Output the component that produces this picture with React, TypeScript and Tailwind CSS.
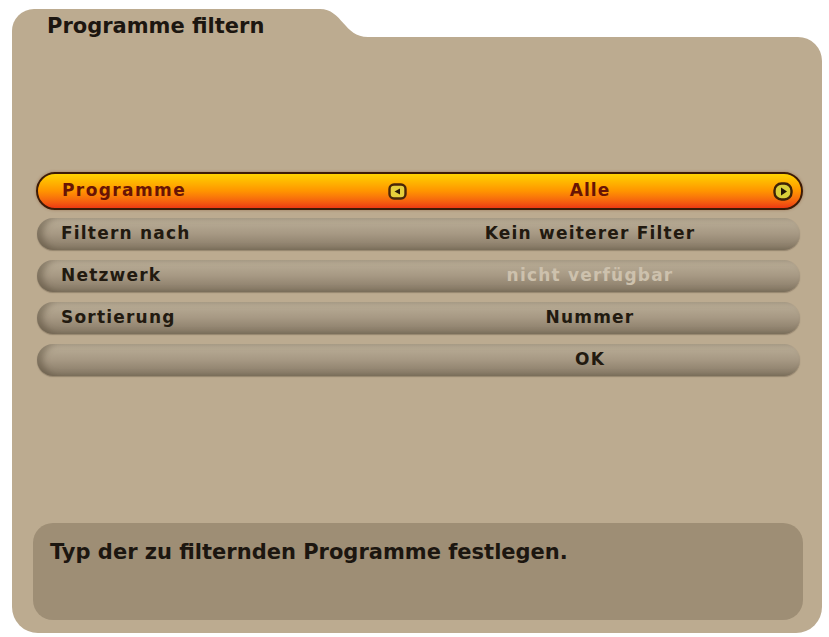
import React from "react";

type Row = { label: string; value: string; disabled?: boolean };

const ROWS: Row[] = [
  { label: "Filtern nach", value: "Kein weiterer Filter" },
  { label: "Netzwerk", value: "nicht verfügbar", disabled: true },
  { label: "Sortierung", value: "Nummer" },
  { label: "", value: "OK" },
];

function ArrowLeft() {
  return (
    <svg width="19" height="17" viewBox="0 0 19 17" aria-hidden>
      <rect x="1.5" y="1.5" width="16" height="14" rx="4.5" fill="#e6cf3c" stroke="#4a2608" strokeWidth="2.4" />
      <path d="M12 5.5 L6.5 8.5 L12 11.5 Z" fill="#2a1a08" />
    </svg>
  );
}

function ArrowRight() {
  return (
    <svg width="20" height="19" viewBox="0 0 20 19" aria-hidden>
      <rect x="1.5" y="1.5" width="17" height="16" rx="7" fill="#d9cf3a" stroke="#3e2206" strokeWidth="2.4" />
      <path d="M8 5.5 L14 9.5 L8 13.5 Z" fill="#1e1406" />
    </svg>
  );
}

export default function App() {
  return (
    <div className="w-[829px] h-[637px] bg-white pl-[12px] pt-[9px] font-['DejaVu_Sans',sans-serif]">
      <div className="flex flex-col w-[810px] h-[624px]">
        {/* folder tab */}
        <div className="flex h-[28px]">
          <div className="w-[308px] bg-[#bcab90] rounded-tl-[22px] pl-[35px] pt-[5px]">
            <h1 className="text-[21px] leading-[24px] font-bold text-[#1c1610] whitespace-nowrap">
              Programme filtern
            </h1>
          </div>
          <svg width="48" height="28" viewBox="0 0 48 28" aria-hidden>
            <path d="M0 0 C 22 0 24 28 48 28 L 0 28 Z" fill="#bcab90" />
          </svg>
        </div>

        <div className="flex-1 bg-[#bcab90] rounded-tr-[24px] rounded-b-[26px] flex flex-col pl-[24px] pr-[19px] pb-[13px]">
          <div className="h-[135px]" />

          {/* selected row */}
          <div className="h-[38px] rounded-full border-[2.5px] border-[#3c1b07] bg-gradient-to-b from-[#ffd200] via-[#ff9400] to-[#ec3812] flex items-center shadow-[0_0_3px_rgba(120,60,20,0.45)]">
            <div className="w-[350px] pl-[24px] text-[17px] font-bold tracking-[1.4px] text-[#681405]">
              Programme
            </div>
            <ArrowLeft />
            <div className="flex-1 text-center text-[17px] font-bold tracking-[1px] text-[#681405]">
              Alle
            </div>
            <div className="pr-[8px] flex">
              <ArrowRight />
            </div>
          </div>

          <div className="flex flex-col gap-[10px] mt-[8px] pl-[1px] pr-[3px]">
            {ROWS.map((r, i) => (
              <div
                key={i}
                className="h-[32px] rounded-full bg-gradient-to-b from-[#bdb09a] via-[#a69883] to-[#857864] shadow-[inset_6px_0_6px_rgba(80,68,50,0.45),0_1px_1px_rgba(110,95,75,0.5)] flex items-center"
              >
                <div className="w-[349px] pl-[24px] text-[17px] font-bold tracking-[1.2px] text-[#221a10]">
                  {r.label}
                </div>
                <div className="w-[19px]" />
                <div
                  className={
                    r.disabled
                      ? "flex-1 text-center text-[17px] font-bold tracking-[1.2px] text-[#cdc1ad]"
                      : "flex-1 text-center text-[17px] font-bold tracking-[1.2px] text-[#221a10]"
                  }
                >
                  {r.value}
                </div>
                <div className="w-[25px]" />
              </div>
            ))}
          </div>

          <div className="flex-1" />

          {/* help text */}
          <div className="h-[97px] ml-[-3px] rounded-[20px] bg-[#9e8e75] pl-[17px] pt-[17px]">
            <p className="text-[21px] leading-[24px] font-bold text-[#1c1610]">
              Typ der zu filternden Programme festlegen.
            </p>
          </div>
        </div>
      </div>
    </div>
  );
}
